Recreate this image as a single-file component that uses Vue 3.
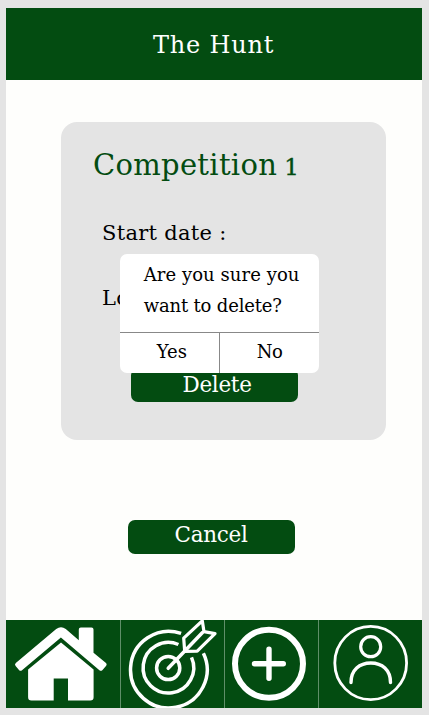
<script setup>
const confirmLines = ['Are you sure you', 'want to delete?']
</script>

<template>
  <div class="screen">
    <header class="topbar"><h1>The Hunt</h1></header>

    <main class="content">
      <section class="card">
        <h2>Competition <span class="num">1</span></h2>
        <p class="field start">Start date :</p>
        <p class="field location">Lo</p>
        <button class="btn delete"><span>Delete</span></button>

        <div class="dialog" role="dialog">
          <div class="message">
            <p v-for="(line, i) in confirmLines" :key="i" :class="'line' + i">{{ line }}</p>
          </div>
          <div class="actions">
            <button class="yes"><span>Yes</span></button>
            <button class="no"><span>No</span></button>
          </div>
        </div>
      </section>
      <button class="btn cancel"><span>Cancel</span></button>
    </main>

    <nav class="tabs">
      <a class="tab">
        <svg width="114" height="88" viewBox="6 620 114 88">
          <g fill="#fff">
            <path d="M15.6 665.9Q14.3 664.5 15.8 663.1L56.2 628.9Q61 625.5 65.8 628.9L78.8 640.3V629.6Q78.8 627.6 80.8 627.6H91.5Q93.5 627.6 93.5 629.6V652.8L106 663.1Q107.3 664.4 106.2 665.8L102.3 670.2Q100.9 671.4 99.4 670.2L60.9 637.6L22 670.2Q20.6 671.4 19.2 670.2Z" />
            <path d="M61 642.5L93.6 669.4V697.3Q93.6 700.6 90.3 700.6H68V678.6H53.7V700.6H31.4Q28.1 700.6 28.1 697.3V669.4Z" />
          </g>
        </svg>
      </a>
      <a class="tab">
        <svg width="103" height="88" viewBox="121 620 103 88">
          <g fill="none" stroke="#fff" stroke-width="3.5" stroke-linejoin="round">
            <path d="M181.1 633.4A38.3 38.3 0 1 0 203.4 653.2" />
            <path d="M178.4 644.5A25.3 25.3 0 1 0 191.5 657.4" />
            <circle cx="168.2" cy="668" r="11.6" />
            <path d="M168.2 668.3L202.5 632.5" stroke-linecap="round" />
            <path d="M184.7 651.3L183.7 638.2L202.3 620.8L204 631.7L215 633.6L197.2 651.1Z" stroke-width="3.2" />
          </g>
        </svg>
      </a>
      <a class="tab">
        <svg width="93" height="88" viewBox="225 620 93 88">
          <g fill="none" stroke="#fff" stroke-linecap="round">
            <circle cx="269" cy="663.8" r="34" stroke-width="6" />
            <path d="M269 649.3V678.2M254.5 663.7H283.3" stroke-width="5.4" />
          </g>
        </svg>
      </a>
      <a class="tab">
        <svg width="102" height="88" viewBox="319 620 102 88">
          <g fill="none" stroke="#fff" stroke-linecap="round">
            <ellipse cx="370.7" cy="663" rx="35.9" ry="36.6" stroke-width="2.8" />
            <circle cx="370.7" cy="646.7" r="10" stroke-width="3.2" />
            <path d="M351 682.5C351 670 359.5 663 370.8 663S390.5 670 390.5 682.5" stroke-width="3.4" />
          </g>
        </svg>
      </a>
    </nav>
  </div>
</template>

<style>
body { background: #e4e4e4; }
</style>

<style scoped>
.screen {
  box-sizing: border-box;
  width: 415.6px;
  height: 700px;
  margin: 8px 0 7px 6px;
  display: flex;
  flex-direction: column;
  background: #fefefc;
  font-family: "DejaVu Serif", serif;
  color: #000;
}
h1, h2, p { margin: 0; font-weight: 400; white-space: nowrap; }
button { display: block; margin: 0; padding: 0; border: 0; font-family: inherit; white-space: nowrap; }
.topbar { height: 72.4px; flex: none; background: #034c11; color: #fff; }
h1 { padding-left: 147px; font-size: 24px; line-height: 74px; letter-spacing: 0.8px; }
.content { flex: 1; padding: 41.4px 0 0 55px; }
.card {
  position: relative;
  box-sizing: border-box;
  width: 324.6px;
  height: 318.4px;
  padding: 23px 0 0 32px;
  border-radius: 16px;
  background: #e4e4e4;
}
h2 { font-size: 29px; line-height: 40px; color: #034c11; letter-spacing: 0.3px; word-spacing: -2.5px; }
.num { font-size: 23px; -webkit-text-stroke: 0.4px #034c11; }
.field { padding-left: 9px; font-size: 21px; line-height: 32px; letter-spacing: 0.3px; }
.start { margin-top: 30px; }
.location { margin-top: 33px; }
.btn { width: 167px; height: 34.4px; border-radius: 7px; background: #034c11; color: #fff; font-size: 21.5px; line-height: 30px; }
.btn span { display: block; height: 34.4px; text-align: left; }
.delete { margin: 54px 0 0 38px; letter-spacing: -0.3px; line-height: 33px; }
.delete span { padding-left: 51.5px; }
.cancel { margin: 79.8px 0 0 66.6px; letter-spacing: -0.3px; }
.cancel span { padding-left: 47px; }
.dialog {
  position: absolute;
  left: 58.7px;
  top: 132px;
  width: 199.3px;
  height: 119.4px;
  display: flex;
  flex-direction: column;
  border-radius: 7px;
  background: #fff;
}
.message { height: 79px; box-sizing: border-box; padding: 5px 0 0 24px; border-bottom: 1px solid #888; font-size: 18px; line-height: 31.4px; }
.line0 { letter-spacing: 0.07px; }
.line1 { letter-spacing: -0.17px; }
.actions { flex: 1; display: grid; grid-template-columns: 100px 1fr; }
.actions button { background: none; color: #000; font-size: 18px; line-height: 37px; text-align: left; }
.actions span { display: block; height: 40px; }
.actions .yes { border-right: 1px solid #888; padding-left: 37px; }
.actions .no { padding-left: 37px; line-height: 38px; letter-spacing: -0.5px; }
.tabs {
  flex: none;
  height: 88px;
  display: grid;
  grid-template-columns: 115px 104px 94px 1fr;
  background: #034c11;
  overflow: hidden;
}
.tab { box-sizing: border-box; border-right: 1px solid #5f8f68; overflow: hidden; }
.tab:last-child { border-right: 0; }
.tab svg { display: block; }
</style>
